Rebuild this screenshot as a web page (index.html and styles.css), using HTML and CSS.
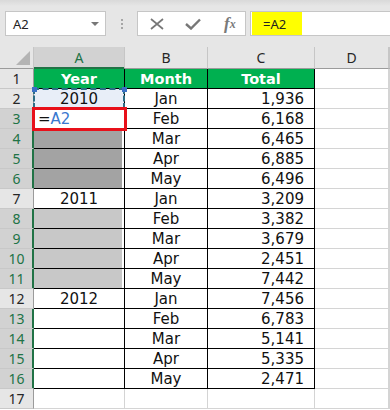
FILE: index.html
```html
<!DOCTYPE html>
<html lang="en">
  <head>
    <meta charset="UTF-8" />
    <meta name="viewport" content="width=device-width, initial-scale=1.0" />
    <title>Fill blanks</title>
    <link rel="stylesheet" href="styles.css">
  </head>
  <body>
    <!-- Barra de nombre y fórmula -->
    <div class="toolbar">
      <div class="name-box">
        <span>A2</span>
        <span class="caret"></span>
      </div>
      <div class="grip"><i></i><i></i><i></i></div>
      <div class="fx-buttons">
        <svg width="14" height="12" viewBox="0 0 14 12">
          <path d="M1 1 L13 11 M13 1 L1 11" stroke="#777" stroke-width="1.7" fill="none" />
        </svg>
        <svg width="16" height="12" viewBox="0 0 16 12">
          <path d="M1 6 L6 10.5 L15 1.5" stroke="#777" stroke-width="2.4" fill="none" />
        </svg>
        <span class="fx">f<sub>x</sub></span>
      </div>
      <div class="formula">
        <span class="hl">=A2</span>
      </div>
    </div>

    <!-- Hoja -->
    <div class="sheet">
      <div class="row head">
        <div class="rh corner"><span class="tri"></span></div>
        <div class="ca sel">A</div>
        <div class="cb">B</div>
        <div class="cc">C</div>
        <div class="cd">D</div>
        <div class="ce"></div>
      </div>
      <div class="row title">
        <div class="rh">1</div>
        <div class="ca t">Year</div>
        <div class="cb t">Month</div>
        <div class="cc t">Total</div>
        <div class="cd"></div>
        <div class="ce"></div>
      </div>
      <div class="row">
        <div class="rh">2</div>
        <div class="ca t ref">2010<i class="dot l"></i><i class="dot r"></i></div>
        <div class="cb t">Jan</div>
        <div class="cc t num">1,936</div>
        <div class="cd"></div>
        <div class="ce"></div>
      </div>
      <div class="row">
        <div class="rh on">3</div>
        <div class="ca t active">=<span class="blue">A2</span></div>
        <div class="cb t">Feb</div>
        <div class="cc t num">6,168</div>
        <div class="cd"></div>
        <div class="ce"></div>
      </div>
      <div class="row">
        <div class="rh on">4</div>
        <div class="ca t dark"></div>
        <div class="cb t">Mar</div>
        <div class="cc t num">6,465</div>
        <div class="cd"></div>
        <div class="ce"></div>
      </div>
      <div class="row">
        <div class="rh on">5</div>
        <div class="ca t dark"></div>
        <div class="cb t">Apr</div>
        <div class="cc t num">6,885</div>
        <div class="cd"></div>
        <div class="ce"></div>
      </div>
      <div class="row">
        <div class="rh on">6</div>
        <div class="ca t dark"></div>
        <div class="cb t">May</div>
        <div class="cc t num">6,496</div>
        <div class="cd"></div>
        <div class="ce"></div>
      </div>
      <div class="row">
        <div class="rh">7</div>
        <div class="ca t">2011</div>
        <div class="cb t">Jan</div>
        <div class="cc t num">3,209</div>
        <div class="cd"></div>
        <div class="ce"></div>
      </div>
      <div class="row">
        <div class="rh on">8</div>
        <div class="ca t light"></div>
        <div class="cb t">Feb</div>
        <div class="cc t num">3,382</div>
        <div class="cd"></div>
        <div class="ce"></div>
      </div>
      <div class="row">
        <div class="rh on">9</div>
        <div class="ca t light"></div>
        <div class="cb t">Mar</div>
        <div class="cc t num">3,679</div>
        <div class="cd"></div>
        <div class="ce"></div>
      </div>
      <div class="row">
        <div class="rh on">10</div>
        <div class="ca t light"></div>
        <div class="cb t">Apr</div>
        <div class="cc t num">2,451</div>
        <div class="cd"></div>
        <div class="ce"></div>
      </div>
      <div class="row">
        <div class="rh on">11</div>
        <div class="ca t light"></div>
        <div class="cb t">May</div>
        <div class="cc t num">7,442</div>
        <div class="cd"></div>
        <div class="ce"></div>
      </div>
      <div class="row">
        <div class="rh">12</div>
        <div class="ca t">2012</div>
        <div class="cb t">Jan</div>
        <div class="cc t num">7,456</div>
        <div class="cd"></div>
        <div class="ce"></div>
      </div>
      <div class="row">
        <div class="rh on">13</div>
        <div class="ca t"></div>
        <div class="cb t">Feb</div>
        <div class="cc t num">6,783</div>
        <div class="cd"></div>
        <div class="ce"></div>
      </div>
      <div class="row">
        <div class="rh on">14</div>
        <div class="ca t"></div>
        <div class="cb t">Mar</div>
        <div class="cc t num">5,141</div>
        <div class="cd"></div>
        <div class="ce"></div>
      </div>
      <div class="row">
        <div class="rh on">15</div>
        <div class="ca t"></div>
        <div class="cb t">Apr</div>
        <div class="cc t num">5,335</div>
        <div class="cd"></div>
        <div class="ce"></div>
      </div>
      <div class="row">
        <div class="rh on">16</div>
        <div class="ca t"></div>
        <div class="cb t">May</div>
        <div class="cc t num">2,471</div>
        <div class="cd"></div>
        <div class="ce"></div>
      </div>
      <div class="row">
        <div class="rh">17</div>
        <div class="ca"></div>
        <div class="cb"></div>
        <div class="cc"></div>
        <div class="cd"></div>
        <div class="ce"></div>
      </div>
    </div>
  </body>
</html>
```

FILE: styles.css
```css
body {
  margin: 0;
  width: 390px;
  height: 410px;
  overflow: hidden;
  background: #fff;
  font-family: "Noto Sans", sans-serif;
}

/* Barra superior */
.toolbar {
  height: 47px;
  box-sizing: border-box;
  padding-top: 11px;
  display: flex;
  align-items: flex-start;
  background: linear-gradient(#d9d9d9, #e6e6e6 6px);
}

.name-box {
  margin-left: 5px;
  width: 101px;
  height: 25px;
  box-sizing: border-box;
  border: 1px solid #c6c6c6;
  background: #fff;
  display: flex;
  align-items: center;
  padding: 0 6px 0 7px;
  font-size: 13px;
  color: #222;
}

.caret {
  margin-left: auto;
  width: 0;
  height: 0;
  border-left: 4px solid transparent;
  border-right: 4px solid transparent;
  border-top: 4px solid #777;
}

.grip {
  width: 31px;
  height: 25px;
  display: flex;
  flex-direction: column;
  align-items: center;
  justify-content: center;
  gap: 2px;
}

.grip i {
  width: 2px;
  height: 2px;
  background: #a6a6a6;
}

.fx-buttons {
  width: 109px;
  height: 25px;
  box-sizing: border-box;
  border: 1px solid #c6c6c6;
  background: #fff;
  display: flex;
  align-items: center;
  padding-left: 12px;
  gap: 21px;
}

.fx {
  font-family: "Liberation Serif", serif;
  font-style: italic;
  font-weight: bold;
  font-size: 17px;
  color: #7a7a7a;
  margin-left: 2px;
  line-height: 1;
}

.fx sub {
  font-size: 12px;
  vertical-align: 1px;
}

.formula {
  margin-left: 4px;
  flex: 1;
  height: 25px;
  box-sizing: border-box;
  border: 1px solid #c6c6c6;
  border-right: none;
  background: #fff;
  padding: 0 0 0 1px;
}

.hl {
  display: flex;
  align-items: center;
  width: 50px;
  height: 23px;
  box-sizing: border-box;
  padding-left: 11px;
  background: #ffff00;
  font-size: 13px;
  color: #222;
}

/* Hoja */
.sheet {
  font-family: "DejaVu Sans", Verdana, sans-serif;
  font-size: 15px;
  color: #111;
}

.row {
  display: flex;
  height: 20px;
}

.row > div {
  box-sizing: border-box;
  border-right: 1px solid #d4d4d4;
  border-bottom: 1px solid #d4d4d4;
  display: flex;
  align-items: center;
  justify-content: center;
  position: relative;
}

.rh {
  width: 34px;
  background: #e6e6e6;
  font-family: "Noto Sans", sans-serif;
  font-size: 14px;
  color: #262626;
}

.row > .rh {
  border-right-color: #9b9b9b;
  border-bottom-color: #c8c8c8;
}

.row > .rh.on {
  background: #d2d2d2;
  color: #217346;
  border-right-color: #217346;
  box-shadow: inset -1px 0 #217346;
}

.ca { width: 91px; }
.cb { width: 83px; }
.cc { width: 107px; }
.cd { width: 74px; }
.ce { flex: 1; }

.head {
  height: 22px;
}

.head > div {
  background: #e6e6e6;
  font-family: "Noto Sans", sans-serif;
  font-size: 14px;
  color: #262626;
}

.row.head > div {
  border-right-color: #c6c6c6;
  border-bottom-color: #9b9b9b;
}

.row.head > .sel {
  background: #d2d2d2;
  color: #217346;
  border-bottom-color: #217346;
  box-shadow: inset 0 -1px #217346;
}

.row > .corner {
  justify-content: flex-end;
  align-items: flex-end;
  padding: 0 3px 3px 0;
}

.tri {
  width: 0;
  height: 0;
  border-left: 14px solid transparent;
  border-bottom: 14px solid #b4b4b4;
}

.row > .t {
  border-right-color: #000;
  border-bottom-color: #000;
}

.title .t {
  background: #00b050;
  color: #fff;
  font-weight: bold;
  font-size: 14.5px;
}

.row > .num {
  justify-content: flex-end;
  padding-right: 10px;
}

.ref {
  background: #e8eef8;
}

.ref::after {
  content: "";
  position: absolute;
  left: -1px;
  top: -1px;
  right: -1px;
  bottom: -1px;
  border: 2px dashed #2d6d86;
}

.dot {
  position: absolute;
  top: -2px;
  width: 5px;
  height: 5px;
  background: #3b70c6;
  z-index: 2;
}

.dot.l { left: -2px; }
.dot.r { right: -3px; }

.row > .active {
  justify-content: flex-start;
  padding-left: 4px;
}

.active::after {
  content: "";
  position: absolute;
  left: -2px;
  top: -2px;
  right: -3px;
  bottom: -3px;
  border: 3px solid #e8101a;
  z-index: 3;
}

.blue {
  color: #3a78d0;
}

.dark {
  background: #a3a3a3;
  box-shadow: inset -2px 0 #fff;
}

.light {
  background: #c8c8c8;
  box-shadow: inset -2px 0 #fff;
}
```
